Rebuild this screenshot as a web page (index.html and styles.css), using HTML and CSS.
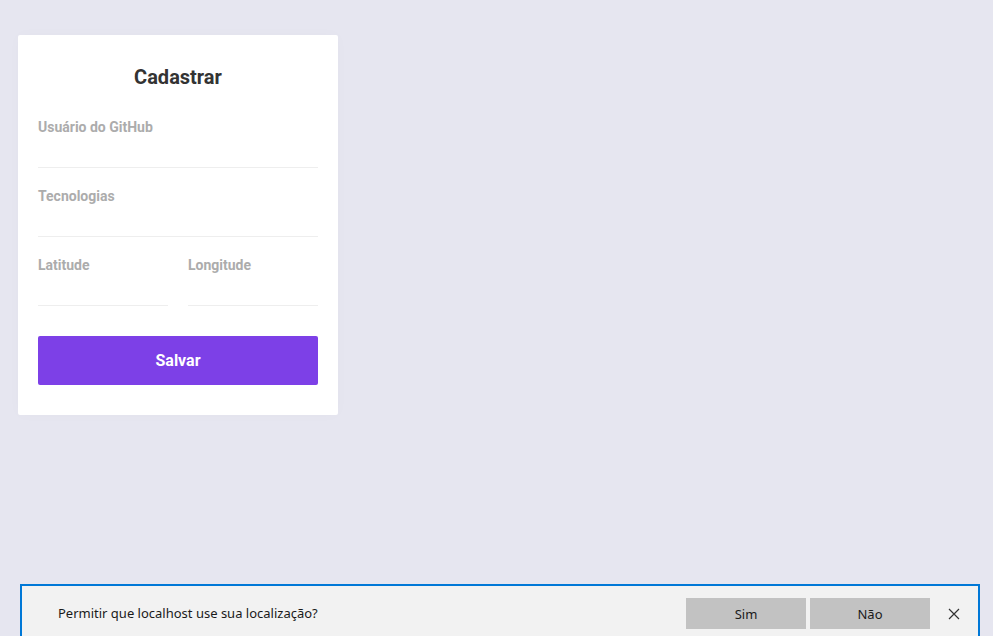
FILE: index.html
```html
<!DOCTYPE html>
<html lang="pt-BR">
<head>
    <meta charset="UTF-8">
    <meta name="viewport" content="width=device-width, initial-scale=1.0">
    <title>DevRadar</title>
    <link rel="stylesheet" href="styles.css">
</head>
<body>
    <div id="app">
        <!-- Cadastro de devs -->
        <aside>
            <strong>Cadastrar</strong>
            <form>
                <div class="input-block">
                    <label for="github_username">Usuário do GitHub</label>
                    <input name="github_username" id="github_username">
                </div>

                <div class="input-block">
                    <label for="techs">Tecnologias</label>
                    <input name="techs" id="techs">
                </div>

                <div class="input-group">
                    <div class="input-block">
                        <label for="latitude">Latitude</label>
                        <input name="latitude" id="latitude">
                    </div>
                    <div class="input-block">
                        <label for="longitude">Longitude</label>
                        <input name="longitude" id="longitude">
                    </div>
                </div>

                <button type="button">Salvar</button>
            </form>
        </aside>
    </div>

    <!-- Pedido de permissão do navegador -->
    <div class="permission">
        <span class="permission-text">Permitir que localhost use sua localização?</span>
        <div class="permission-actions">
            <button type="button">Sim</button>
            <button type="button">Não</button>
            <svg class="close" width="12" height="12" viewBox="0 0 12 12">
                <path d="M1 1 L11 11 M11 1 L1 11" stroke="#333" stroke-width="1.2" fill="none"/>
            </svg>
        </div>
    </div>
</body>
</html>
```

FILE: styles.css
```css
* {
    margin: 0;
    padding: 0;
    box-sizing: border-box;
    outline: 0;
}

body {
    background: #e6e6f0;
    font-family: Roboto, Arial, sans-serif;
    -webkit-font-smoothing: antialiased;
    height: 636px;
    overflow: hidden;
}

#app {
    padding: 35px 18px;
    display: flex;
    align-items: flex-start;
}

aside {
    width: 320px;
    background: #fff;
    box-shadow: 0 0 14px 0 rgba(0, 0, 0, 0.02);
    border-radius: 2px;
    padding: 30px 20px;
}

aside strong {
    font-size: 20px;
    text-align: center;
    display: block;
    color: #333;
}

aside form {
    margin-top: 30px;
}

aside form .input-block + .input-block {
    margin-top: 20px;
}

aside form .input-block label {
    color: #acacac;
    font-size: 14px;
    line-height: 17px;
    font-weight: bold;
    display: block;
}

aside form .input-block input {
    width: 100%;
    height: 32px;
    font-size: 14px;
    color: #666;
    border: 0;
    border-bottom: 1px solid #eee;
}

aside form .input-group {
    margin-top: 20px;
    display: grid;
    grid-template-columns: 1fr 1fr;
    gap: 20px;
}

aside form .input-group .input-block + .input-block {
    margin-top: 0;
}

aside form button {
    width: 100%;
    border: 0;
    margin-top: 30px;
    background: #7d40e7;
    border-radius: 2px;
    padding: 15px 20px;
    font-family: Roboto, Arial, sans-serif;
    font-size: 16px;
    line-height: 19px;
    font-weight: bold;
    color: #fff;
    cursor: pointer;
}

/* Barra de permissão */
.permission {
    position: fixed;
    left: 20px;
    right: 13px;
    top: 584px;
    height: 60px;
    background: #f2f2f2;
    border: 2px solid #0078d7;
    display: flex;
    align-items: flex-start;
    justify-content: space-between;
    padding: 12px 0 0 36px;
    font-family: "Noto Sans", "Open Sans", sans-serif;
    font-size: 13px;
    color: #1a1a1a;
}

.permission-text {
    line-height: 31px;
}

.permission-actions {
    display: flex;
    align-items: center;
    gap: 4px;
}

.permission-actions button {
    width: 120px;
    height: 31px;
    border: 0;
    background: #c2c2c2;
    font-family: "Noto Sans", "Open Sans", sans-serif;
    font-size: 13px;
    color: #1a1a1a;
}

.permission-actions .close {
    margin: 0 18px 0 14px;
}
```
